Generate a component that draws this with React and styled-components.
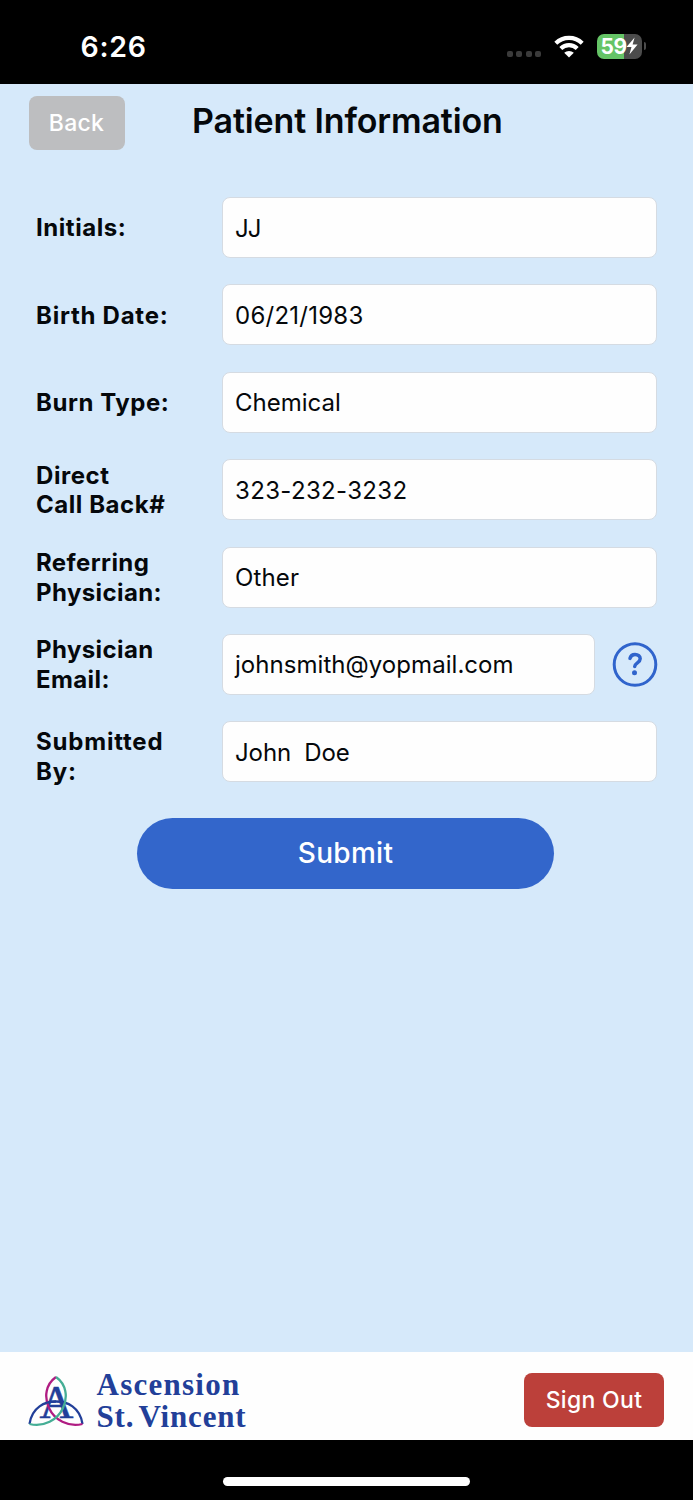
import React from "react";
import styled, { createGlobalStyle, css } from "styled-components";

const fields = [
  { label: ["Initials:"], value: "JJ", spacing: "-1px" },
  { label: ["Birth Date:"], value: "06/21/1983", spacing: "0.25px", labelSpacing: "0.75px" },
  { label: ["Burn Type:"], value: "Chemical" },
  { label: ["Direct", "Call Back#"], value: "323-232-3232", spacing: "0.35px" },
  { label: ["Referring", "Physician:"], value: "Other", spacing: "0.15px", labelSpacing: "0.4px" },
  { label: ["Physician", "Email:"], value: "johnsmith@yopmail.com", spacing: "0.05px", labelSpacing: "0.4px", help: true },
  { label: ["Submitted", "By:"], value: "John  Doe", spacing: "-0.1px", labelSpacing: "0.8px", low: true },
];

const WifiIcon = () => (
  <svg width="30" height="23" viewBox="0 0 30 23">
    <g fill="none" stroke="#fff" strokeWidth="4.2">
      <path d="M1.8 8.2a19 19 0 0 1 26.4 0" />
      <path d="M6.8 13.4a11.8 11.8 0 0 1 16.4 0" />
    </g>
    <path d="M10.2 17.8a7 7 0 0 1 9.6 0L15 22.6z" fill="#fff" />
  </svg>
);

const BoltIcon = () => (
  <svg width="12" height="18" viewBox="0 0 12 18">
    <path d="M8.6 0.4 0.5 10h5L3.4 17.4 11.6 7.6H6.6z" fill="#fff" />
  </svg>
);

const HelpIcon = () => (
  <svg width="46" height="46" viewBox="0 0 46 46" fill="none" stroke="#3064cc">
    <circle cx="23" cy="23.5" r="20.8" strokeWidth="3" />
    <path
      d="M18 17.4c.6-2.6 2.5-3.9 5-3.9 3.1 0 5.2 1.7 5.2 4.3 0 4-5.5 4-5.5 7.8"
      strokeWidth="3.5"
      strokeLinecap="round"
    />
    <circle cx="22.5" cy="31.8" r="2.5" fill="#3064cc" stroke="none" />
  </svg>
);

const AscensionMark = () => (
  <svg width="56" height="52" viewBox="28 1376 56 52" fill="none">
    <StMarkLetter x="56.4" y="1418.5" textAnchor="middle">
      A
    </StMarkLetter>
    <g strokeWidth="2.3">
      <path d="M29.5 1425C32 1408 45 1402.5 56 1402.5S80 1408 82.5 1425" stroke="#223f99" />
      <path d="M56 1378C45.5 1385.5 44 1398 49 1409 54.5 1421 68 1428.5 82.5 1425" stroke="#b01c82" />
      <path d="M56 1378C66.5 1385.5 68 1398 63 1409 57.5 1421 44 1428.5 29.5 1425" stroke="#45ae95" />
      <path d="M45.5 1404q5-1.5 10.5-1.5" stroke="#223f99" />
    </g>
  </svg>
);

const App = () => {
  return (
    <StScreen>
      <GlobalStyle />
      <StStatusBar>
        <StClock>6:26</StClock>
        <StStatusIcons>
          <StSignal>
            <i />
            <i />
            <i />
            <i />
          </StSignal>
          <WifiIcon />
          <StBatteryWrapper>
            <StBattery>
              59
              <BoltIcon />
            </StBattery>
            <StBatteryTip />
          </StBatteryWrapper>
        </StStatusIcons>
      </StStatusBar>

      <StHeader>
        <StBackButton>Back</StBackButton>
        <StTitle>Patient Information</StTitle>
      </StHeader>

      <StForm>
        {fields.map((field) => (
          <StRow key={field.value}>
            <StLabel $low={field.low} $spacing={field.labelSpacing}>
              {field.label.map((line) => (
                <span key={line}>{line}</span>
              ))}
            </StLabel>
            <StValue $email={field.help} $spacing={field.spacing}>
              {field.value}
            </StValue>
            {field.help && <HelpIcon />}
          </StRow>
        ))}
        <StSubmitButton>Submit</StSubmitButton>
      </StForm>

      <StFooter>
        <StBrand>
          <AscensionMark />
          <StBrandName>
            <StBrandLine $spacing="1.25px">Ascension</StBrandLine>
            <StBrandLine $spacing="0.85px">St. Vincent</StBrandLine>
          </StBrandName>
        </StBrand>
        <StSignOutButton>Sign Out</StSignOutButton>
      </StFooter>
      <StHomeArea>
        <StHomeIndicator />
      </StHomeArea>
    </StScreen>
  );
};

export default App;

const GlobalStyle = createGlobalStyle`
  * {
    box-sizing: border-box;
  }
  body {
    margin: 0;
    background: #000;
  }
  button {
    border: none;
    padding: 0;
    font-family: inherit;
  }
  svg {
    display: block;
    flex: none;
  }
`;

const flex = (justify, align) => css`
  display: flex;
  justify-content: ${justify};
  align-items: ${align};
`;

const StScreen = styled.div`
  display: flex;
  flex-direction: column;
  width: 693px;
  height: 1500px;
  background: #d6e9fa;
  color: #05080b;
  font-family: Inter, "Liberation Sans", sans-serif;
`;

const StStatusBar = styled.div`
  ${flex("space-between", "flex-start")}
  height: 83.5px;
  flex: none;
  padding: 30px 47.5px 0 80.5px;
  background: #000;
  color: #fff;
`;

const StClock = styled.div`
  font-size: 28.5px;
  line-height: 33px;
  font-weight: 600;
  letter-spacing: 0.75px;
`;

const StStatusIcons = styled.div`
  ${flex("flex-end", "center")}
  height: 32px;
`;

const StSignal = styled.div`
  display: flex;
  gap: 3.5px;
  margin: 16px 13px 0 0;
  i {
    width: 6px;
    height: 6px;
    border-radius: 2px;
    background: #3b3b3b;
  }
`;

const StBatteryWrapper = styled.div`
  ${flex("flex-start", "center")}
  gap: 1.5px;
  margin-left: 13px;
`;

const StBattery = styled.div`
  ${flex("center", "center")}
  width: 45px;
  height: 25px;
  border-radius: 7px;
  background: linear-gradient(90deg, #65c466 0 59%, #4c4c4c 59%);
  font-size: 21px;
  font-weight: 700;
  letter-spacing: -0.6px;
`;

const StBatteryTip = styled.div`
  width: 2px;
  height: 8px;
  border-radius: 0 2px 2px 0;
  background: #4c4c4c;
`;

const StHeader = styled.div`
  display: flex;
  align-items: flex-start;
  flex: none;
  height: 113.5px;
  padding: 12.5px 28.5px 0;
`;

const StBackButton = styled.button`
  width: 96px;
  height: 54px;
  border-radius: 8px;
  background: #bdbec0;
  color: #fff;
  font-size: 23px;
  font-weight: 500;
  letter-spacing: 0.3px;
`;

const StTitle = styled.h1`
  margin: 4px 0 0 67.5px;
  font-size: 34px;
  line-height: 42px;
  font-weight: 600;
  letter-spacing: -0.13px;
  white-space: nowrap;
`;

const StForm = styled.div`
  display: flex;
  flex-direction: column;
  gap: 26.4px;
  padding: 0 36px;
  flex: 1;
`;

const StRow = styled.div`
  ${flex("flex-start", "center")}
  height: 61px;
  flex: none;
`;

const StLabel = styled.div`
  width: 186px;
  flex: none;
  padding-top: ${({ $low }) => ($low ? "9.5px" : "1px")};
  font-size: 24px;
  line-height: 29.6px;
  font-weight: 700;
  letter-spacing: ${({ $spacing }) => $spacing || "0.55px"};
  span {
    display: block;
    white-space: nowrap;
  }
`;

const StValue = styled.div`
  ${flex("flex-start", "center")}
  height: 61px;
  flex: ${({ $email }) => ($email ? "0 0 373px" : "1")};
  margin-right: ${({ $email }) => ($email ? "17px" : "0")};
  padding: 1px 0 0 12px;
  border: 1px solid #d5dbe2;
  border-radius: 8px;
  background: #fefefe;
  font-size: 24px;
  font-weight: 400;
  letter-spacing: ${({ $spacing }) => $spacing || "0"};
  white-space: pre;
`;

const StSubmitButton = styled.button`
  align-self: center;
  width: 417px;
  height: 71px;
  margin: 9px 2px 0 0;
  border-radius: 36px;
  background: #3366cb;
  color: #fff;
  font-size: 28px;
  font-weight: 500;
  letter-spacing: 0.3px;
`;

const StFooter = styled.div`
  ${flex("space-between", "center")}
  flex: none;
  height: 87.5px;
  padding: 8px 29px 0 28px;
  background: #fefefe;
`;

const StBrand = styled.div`
  ${flex("flex-start", "center")}
  gap: 12.5px;
  padding-top: 2px;
`;

const StBrandName = styled.div`
  color: #223f99;
`;

const StBrandLine = styled.div`
  font-family: "Liberation Serif", serif;
  font-size: 31px;
  line-height: 32px;
  font-weight: 700;
  letter-spacing: ${({ $spacing }) => $spacing};
  word-spacing: -4px;
  white-space: nowrap;
`;

const StMarkLetter = styled.text`
  font-family: "Liberation Serif", serif;
  font-size: 47px;
  fill: #223f99;
  stroke: #223f99;
  stroke-width: 0.5px;
`;

const StSignOutButton = styled.button`
  width: 140px;
  height: 54px;
  border-radius: 8px;
  background: #bc403a;
  color: #fff;
  font-size: 23px;
  font-weight: 500;
  letter-spacing: 0.3px;
`;

const StHomeArea = styled.div`
  ${flex("center", "flex-start")}
  flex: none;
  height: 60.5px;
  padding-top: 37px;
  background: #000;
`;

const StHomeIndicator = styled.div`
  width: 247px;
  height: 9px;
  border-radius: 5px;
  background: #fff;
`;
